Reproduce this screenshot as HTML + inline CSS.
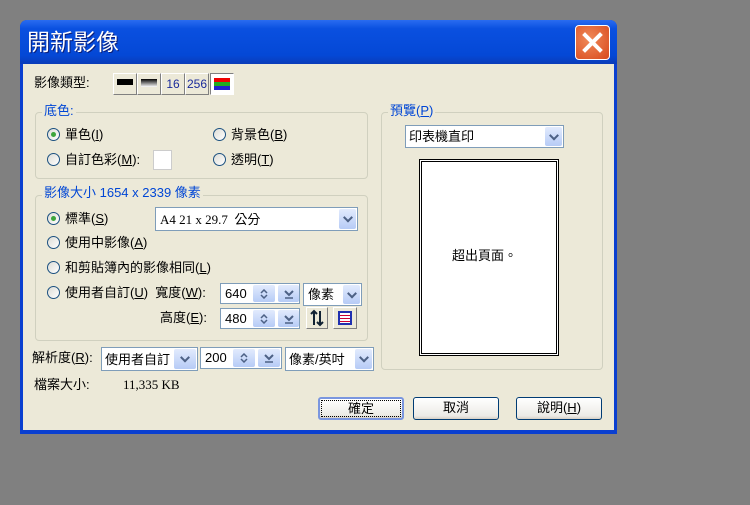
<!DOCTYPE html>
<html><head><meta charset="utf-8"><style>
*{margin:0;padding:0;box-sizing:border-box}
body{width:750px;height:505px;background:#808080;position:relative;overflow:hidden;font-family:"Liberation Sans","Noto Sans CJK TC",sans-serif;font-size:13px;color:#000}
.a{position:absolute}
.dlg{left:20px;top:20px;width:597px;height:414px;background:#0a3fd0;border-radius:7px 7px 0 0}
.title{left:20px;top:20px;width:597px;height:44px;background:linear-gradient(#2a6cf0,#0a50e0 20%,#0448d6 80%,#0a3cb8);border-radius:7px 7px 0 0}
.body{left:23px;top:64px;width:591px;height:366px;background:#ece9d8}
.t{white-space:nowrap;line-height:1}
.grp{border:1px solid #d0d0bf;border-radius:4px}
.lbl{color:#0046d5;background:#ece9d8;padding:0 2px}
.rad{width:13px;height:13px;border-radius:50%;border:1px solid #1c5180;background:linear-gradient(135deg,#dcdcd6,#fff)}
.rad.on::after{content:"";position:absolute;left:3px;top:3px;width:5px;height:5px;border-radius:50%;background:#3ca53c}
.inp{background:#fff;border:1px solid #7f9db9}
.dd{position:absolute;right:1px;top:1px;bottom:1px;width:17px;background:linear-gradient(#e2ebfd,#b6cbf6);border-radius:2px}
.dd::after{content:"";position:absolute;left:50%;top:50%;width:5px;height:5px;border-right:2px solid #4d6185;border-bottom:2px solid #4d6185;transform:translate(-50%,-70%) rotate(45deg)}
.spin{position:absolute;background:linear-gradient(#e2ebfd,#b6cbf6);border-radius:2px}
.spin svg{position:absolute;left:50%;top:50%;transform:translate(-50%,-50%)}
.btn{border:1px solid #003c74;border-radius:3px;background:linear-gradient(#fff,#ecebe6 85%,#d6d0c5);text-align:center;line-height:20px}
.tb{width:24px;height:22px;border:1px solid #fff;border-right-color:#808080;border-bottom-color:#808080;background:#ece9d8;text-align:center;color:#1a2a9a;font-size:12px;line-height:20px}
</style></head><body>
<div class="a dlg"></div>
<div class="a title"></div>
<div class="a t" style="left:27px;top:31px;font-size:23px;color:#fff;text-shadow:1px 1px #0a1e7a">開新影像</div>
<div class="a" style="left:575px;top:25px;width:35px;height:35px;border:1px solid #fff;border-radius:4px;background:radial-gradient(circle at 40% 40%,#f08a5a,#d8491c)"></div>
<svg class="a" style="left:575px;top:25px" width="35" height="35"><path d="M10 10L25 25M25 10L10 25" stroke="#fff" stroke-width="4" stroke-linecap="square"/></svg>
<div class="a body"></div>

<div class="a t" style="left:34px;top:76px">影像類型:</div>
<div class="a tb" style="left:113px;top:73px"><div style="margin:5px 3px 0;height:6px;background:#000"></div></div>
<div class="a tb" style="left:137px;top:73px"><div style="margin:5px 3px 0;height:8px;background:linear-gradient(#000,#fff)"></div></div>
<div class="a tb" style="left:161px;top:73px">16</div>
<div class="a tb" style="left:185px;top:73px">256</div>
<div class="a tb" style="left:210px;top:73px;background:#fff;border-color:#808080 #fff #fff #808080"><div style="margin:4px 3px 0;height:12px;background:linear-gradient(#e00 33%,#2a2 33%,#2a2 66%,#22c 66%)"></div></div>

<div class="a grp" style="left:35px;top:112px;width:333px;height:67px"></div>
<div class="a t lbl" style="left:42px;top:104px">底色:</div>
<div class="a rad on" style="left:47px;top:128px"></div><div class="a t" style="left:65px;top:128px">單色(<u>I</u>)</div>
<div class="a rad" style="left:213px;top:128px"></div><div class="a t" style="left:231px;top:128px">背景色(<u>B</u>)</div>
<div class="a rad" style="left:47px;top:153px"></div><div class="a t" style="left:65px;top:153px">自訂色彩(<u>M</u>):</div>
<div class="a" style="left:153px;top:150px;width:19px;height:20px;background:#fff;border:1px solid #ccc"></div>
<div class="a rad" style="left:213px;top:153px"></div><div class="a t" style="left:231px;top:153px">透明(<u>T</u>)</div>

<div class="a grp" style="left:35px;top:195px;width:333px;height:146px"></div>
<div class="a t lbl" style="left:42px;top:186px">影像大小 1654 x 2339 像素</div>
<div class="a rad on" style="left:47px;top:212px"></div><div class="a t" style="left:65px;top:212px">標準(<u>S</u>)</div>
<div class="a inp" style="left:155px;top:207px;width:203px;height:24px"><span class="a t" style="left:4px;top:5px;font-family:'Liberation Serif','Noto Sans CJK TC',serif">A4 21 x 29.7 &nbsp;公分</span><div class="dd"></div></div>
<div class="a rad" style="left:47px;top:236px"></div><div class="a t" style="left:65px;top:236px">使用中影像(<u>A</u>)</div>
<div class="a rad" style="left:47px;top:261px"></div><div class="a t" style="left:65px;top:261px">和剪貼簿內的影像相同(<u>L</u>)</div>
<div class="a rad" style="left:47px;top:286px"></div><div class="a t" style="left:65px;top:286px">使用者自訂(<u>U</u>) &nbsp;寬度(<u>W</u>):</div>

<div class="a inp" style="left:220px;top:283px;width:80px;height:21px"><span class="a t" style="left:4px;top:3px">640</span>
<div class="spin" style="left:32px;top:1px;width:22px;height:17px"><svg width="8" height="10"><path d="M1 4L4 1L7 4M1 6L4 9L7 6" fill="none" stroke="#4d6185" stroke-width="1.5"/></svg></div>
<div class="spin" style="left:57px;top:1px;width:21px;height:17px"><svg width="10" height="10"><path d="M1 2L5 6L9 2" fill="none" stroke="#4d6185" stroke-width="2"/><path d="M1 9H9" stroke="#4d6185" stroke-width="1.5"/></svg></div></div>
<div class="a inp" style="left:303px;top:283px;width:59px;height:23px"><span class="a t" style="left:4px;top:4px">像素</span><div class="dd"></div></div>
<div class="a t" style="left:160px;top:311px">高度(<u>E</u>):</div>
<div class="a inp" style="left:220px;top:308px;width:80px;height:21px"><span class="a t" style="left:4px;top:3px">480</span>
<div class="spin" style="left:32px;top:1px;width:22px;height:17px"><svg width="8" height="10"><path d="M1 4L4 1L7 4M1 6L4 9L7 6" fill="none" stroke="#4d6185" stroke-width="1.5"/></svg></div>
<div class="spin" style="left:57px;top:1px;width:21px;height:17px"><svg width="10" height="10"><path d="M1 2L5 6L9 2" fill="none" stroke="#4d6185" stroke-width="2"/><path d="M1 9H9" stroke="#4d6185" stroke-width="1.5"/></svg></div></div>
<div class="a tb" style="left:306px;top:307px;width:22px"><svg width="20" height="20"><path d="M7 3V17M4 6L7 3L10 6" fill="none" stroke="#123" stroke-width="2"/><path d="M13 3V17M10 14L13 17L16 14" fill="none" stroke="#123" stroke-width="2"/></svg></div>
<div class="a tb" style="left:333px;top:307px;width:24px"><div style="margin:3px 4px;height:14px;border:2px solid #2030b0;background:repeating-linear-gradient(#fff 0 2px,#c03 2px 3px)"></div></div>

<div class="a t" style="left:32px;top:351px">解析度(<u>R</u>):</div>
<div class="a inp" style="left:101px;top:347px;width:97px;height:24px"><span class="a t" style="left:3px;top:5px">使用者自訂</span><div class="dd" style="width:22px"></div></div>
<div class="a inp" style="left:200px;top:347px;width:82px;height:22px"><span class="a t" style="left:4px;top:3px">200</span>
<div class="spin" style="left:32px;top:1px;width:22px;height:18px"><svg width="8" height="10"><path d="M1 4L4 1L7 4M1 6L4 9L7 6" fill="none" stroke="#4d6185" stroke-width="1.5"/></svg></div>
<div class="spin" style="left:57px;top:1px;width:22px;height:18px"><svg width="10" height="10"><path d="M1 2L5 6L9 2" fill="none" stroke="#4d6185" stroke-width="2"/><path d="M1 9H9" stroke="#4d6185" stroke-width="1.5"/></svg></div></div>
<div class="a inp" style="left:285px;top:347px;width:89px;height:24px"><span class="a t" style="left:3px;top:5px">像素/英吋</span><div class="dd"></div></div>

<div class="a t" style="left:34px;top:378px">檔案大小:</div>
<div class="a t" style="left:123px;top:378px;font-family:'Liberation Serif',serif">11,335 KB</div>

<div class="a btn" style="left:318px;top:397px;width:86px;height:23px;border-width:2px;border-color:#7a96df"><div style="border:1px dotted #000;margin:1px;line-height:15px;height:17px">確定</div></div>
<div class="a btn" style="left:413px;top:397px;width:86px;height:23px">取消</div>
<div class="a btn" style="left:516px;top:397px;width:86px;height:23px">說明(<u>H</u>)</div>

<div class="a grp" style="left:381px;top:112px;width:222px;height:258px"></div>
<div class="a t lbl" style="left:388px;top:104px">預覽(<u>P</u>)</div>
<div class="a inp" style="left:405px;top:125px;width:159px;height:23px"><span class="a t" style="left:3px;top:4px">印表機直印</span><div class="dd"></div></div>
<div class="a" style="left:419px;top:159px;width:140px;height:197px;background:#fff;border:3px double #000"></div>
<div class="a t" style="left:452px;top:249px">超出頁面。</div>
</body></html>
